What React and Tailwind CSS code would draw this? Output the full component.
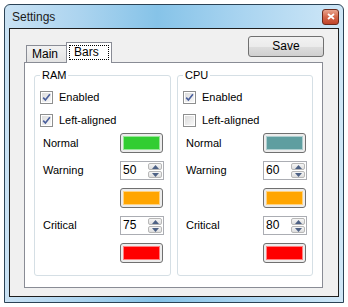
import React from 'react';

const font = { fontFamily: '"Liberation Sans", Arial, sans-serif' };

function CheckBox({ checked, label }) {
  return (
    <div className="flex items-center h-[13px]">
      <div className="w-[13px] h-[13px] border border-[#8e8f8f] bg-white p-[1px]">
        <div className="w-full h-full bg-gradient-to-br from-[#dcdcdc] to-[#f8f8f8] flex items-center justify-center">
          {checked && (
            <svg width="9" height="9" viewBox="0 0 9 9">
              <path d="M1.2 4.6 L3.4 7 L7.9 1.2" fill="none" stroke="#4a5f9c" strokeWidth="1.6" />
            </svg>
          )}
        </div>
      </div>
      <span className="ml-[6px] text-[11px] leading-[13px] text-black">{label}</span>
    </div>
  );
}

function ColorButton({ fill }) {
  return (
    <div className="w-[43px] h-[20px] rounded-[3px] border border-[#707070] bg-[#ececec] p-[2px]">
      <div className={`w-full h-full border border-[#ffffff80] ${fill}`} />
    </div>
  );
}

function Arrow({ up }) {
  return (
    <svg width="7" height="4" viewBox="0 0 7 4">
      {up ? <path d="M0 4 L3.5 0 L7 4 Z" fill="#4d6185" /> : <path d="M0 0 L3.5 4 L7 0 Z" fill="#4d6185" />}
    </svg>
  );
}

function Spinner({ value }) {
  return (
    <div className="w-[44px] h-[19px] border border-[#abadb3] bg-white flex">
      <span className="flex-1 pl-[2px] text-[12px] leading-[17px] text-black">{value}</span>
      <div className="w-[15px] flex flex-col gap-px py-px pr-px">
        <div className="flex-1 rounded-[2px] border border-[#b8b8b8] bg-gradient-to-b from-[#f6f6f6] to-[#dedede] flex items-center justify-center">
          <Arrow up />
        </div>
        <div className="flex-1 rounded-[2px] border border-[#b8b8b8] bg-gradient-to-b from-[#f6f6f6] to-[#dedede] flex items-center justify-center">
          <Arrow />
        </div>
      </div>
    </div>
  );
}

function Row({ label, children, className }) {
  return (
    <div className={`flex items-center ${className}`}>
      <span className="w-[80px] pl-[3px] text-[11px] leading-[13px] text-black">{label}</span>
      {children}
    </div>
  );
}

function Group({ title, width, left, normal, warning, critical }) {
  return (
    <fieldset className={`${width} h-[207px] border border-[#d5dfe5] rounded-[3px] px-[5px]`}>
      <legend className="px-[2px] text-[11px] leading-[13px] text-black">{title}</legend>
      <div className="flex flex-col">
        <div className="mt-[9px]"><CheckBox checked label="Enabled" /></div>
        <div className="mt-[10px]"><CheckBox checked={left} label="Left-aligned" /></div>
        <Row label="Normal" className="mt-[6px] h-[20px]"><ColorButton fill={normal} /></Row>
        <Row label="Warning" className="mt-[8px] h-[19px]"><Spinner value={warning} /></Row>
        <Row label="" className="mt-[8px] h-[20px]"><ColorButton fill="bg-[#ffa500]" /></Row>
        <Row label="Critical" className="mt-[8px] h-[19px]"><Spinner value={critical} /></Row>
        <Row label="" className="mt-[8px] h-[20px]"><ColorButton fill="bg-[#ff0000]" /></Row>
      </div>
    </fieldset>
  );
}

export default function App() {
  return (
    <div className="w-[348px] h-[307px] bg-white pt-[4px] pl-[4px]" style={font}>
      <div className="w-[340px] h-[299px] border border-[#2b4356] rounded-t-[6px] flex flex-col bg-[linear-gradient(90deg,#c9e2f4_0%,#acd4ef_22%,#86c3e8_45%,#a9d4f0_70%,#cfe7f7_100%)]">
        {/* title bar */}
        <div className="h-[23px] flex items-center pl-[7px] pr-[4px]">
          <span className="flex-1 text-[12px] leading-[14px] text-[#1b1b1b] pt-[1px]">Settings</span>
          <div className="w-[17px] h-[16px] rounded-[3px] border border-[#6b2a1c] bg-gradient-to-b from-[#e8a48e] via-[#d5674a] to-[#c0442a] flex items-center justify-center">
            <svg width="8" height="7" viewBox="0 0 8 7">
              <path d="M1 1 L7 6 M7 1 L1 6" stroke="#ffffff" strokeWidth="1.8" />
            </svg>
          </div>
        </div>
        {/* client */}
        <div className="flex-1 px-[4px] pb-[5px]">
          <div className="h-full border border-[#1e1e1e] bg-[#f0f0f0] pt-[7px] pl-[14px]">
            <div className="w-[299px] h-[26px] flex items-end">
              <div className="ml-[2px] w-[41px] h-[17px] border border-b-0 border-[#898c95] bg-gradient-to-b from-[#f2f2f2] to-[#e3e3e3] pl-[5px] text-[12px] leading-[16px] text-black">
                Main
              </div>
              <div className="relative z-10 -ml-px -mb-px w-[46px] h-[21px] border border-b-0 border-[#898c95] bg-white pt-[2px] px-[2px]">
                <div className="h-[15px] border border-dotted border-black pl-[4px] text-[12px] leading-[13px] text-black">
                  Bars
                </div>
              </div>
              <div className="flex-1" />
              <button className="mb-[5px] -mr-px w-[76px] h-[21px] rounded-[3px] border border-[#707070] bg-[linear-gradient(180deg,#f2f2f2_0%,#ebebeb_50%,#dddddd_51%,#cfcfcf_100%)] text-[12px] leading-[19px] text-black">
                Save
              </button>
            </div>
            <div className="w-[299px] h-[226px] border border-[#898c95] bg-white pt-[6px] pl-[9px] flex gap-[6px]">
              <Group title="RAM" width="w-[137px]" left normal="bg-[#32cd32]" warning="50" critical="75" />
              <Group title="CPU" width="w-[135px]" left={false} normal="bg-[#5f9ea0]" warning="60" critical="80" />
            </div>
          </div>
        </div>
      </div>
    </div>
  );
}
